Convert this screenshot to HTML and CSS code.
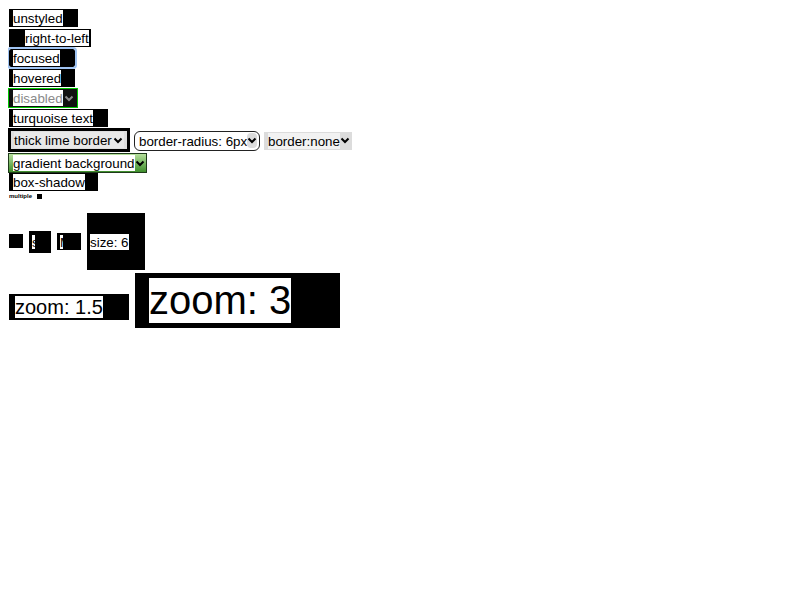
FILE: index.html
```html
<!DOCTYPE html>
<html>
<head>
<meta charset="utf-8">
<link rel="stylesheet" href="styles.css">
</head>
<body>
<div class="stack">
  <div class="row"><div class="sel w-unstyled"><span class="t">unstyled</span></div></div>
  <div class="row"><div class="sel w-rtl"><span class="t">right-to-left</span></div></div>
  <div class="row"><div class="sel w-focus"><span class="t">focused</span></div></div>
  <div class="row"><div class="sel w-hover"><span class="t">hovered</span></div></div>
  <div class="row"><div class="sel disabled"><span class="t">disabled</span><svg class="chev" width="10" height="7" viewBox="0 0 10 7"><path d="M1.5 1.5 L5 5 L8.5 1.5" fill="none" stroke="#8a8a8a" stroke-width="2"/></svg></div></div>
  <div class="row"><div class="sel w-turq"><span class="t">turquoise text</span></div></div>
  <div class="row row-tall">
    <div class="thick"><span class="tt">thick lime border</span><span class="cb"><svg width="10" height="7" viewBox="0 0 10 7"><path d="M1.5 1.5 L5 5 L8.5 1.5" fill="none" stroke="#000" stroke-width="2"/></svg></span></div>
    <div class="radius"><span class="tr">border-radius: 6px</span><span class="cbr"><svg width="10" height="7" viewBox="0 0 10 7"><path d="M1.5 1.5 L5 5 L8.5 1.5" fill="none" stroke="#000" stroke-width="2"/></svg></span></div>
    <div class="nobord"><span class="tn">border:none</span><span class="cbn"><svg width="10" height="7" viewBox="0 0 10 7"><path d="M1.5 1.5 L5 5 L8.5 1.5" fill="none" stroke="#000" stroke-width="2"/></svg></span></div>
  </div>
  <div class="row"><div class="grad"><span class="tg">gradient background</span><span class="cbg"><svg width="10" height="7" viewBox="0 0 10 7"><path d="M1.5 1.5 L5 5 L8.5 1.5" fill="none" stroke="#000" stroke-width="2"/></svg></span></div></div>
  <div class="row row-shadow"><div class="sel w-shadow"><span class="t">box-shadow</span></div></div>
  <div class="row-tiny"><span class="tiny">multiple</span><span class="tinysq"></span></div>
  <div class="row-size">
    <div class="sq"></div>
    <div class="b2"><span class="strip">s</span></div>
    <div class="b3"><span class="strip">M</span></div>
    <div class="big"><span class="t">size: 6</span></div>
  </div>
  <div class="row-zoom">
    <div class="z15"><span class="tz15">zoom: 1.5</span></div>
    <div class="z3"><span class="tz3">zoom: 3</span></div>
  </div>
</div>
</body>
</html>
```
FILE: styles.css
```css
body {
  margin: 8px;
  font-family: "Liberation Sans", Arial, sans-serif;
  font-size: 13.33px;
  line-height: 16px;
  color: #000;
  background: #fff;
}
.stack {
  display: flex;
  flex-direction: column;
  align-items: flex-start;
}
.row {
  display: flex;
  align-items: center;
  height: 20px;
  gap: 4px;
}
.row-tall { height: 25px; }
.row-shadow { height: 19px; align-items: flex-start; }
.sel {
  display: flex;
  align-items: center;
  background: #000;
  height: 18px;
  margin-left: 1px;
  padding-left: 4px;
  box-sizing: border-box;
}
.t {
  flex: none;
  background: #fff;
  height: 16px;
  line-height: 18px;
  white-space: nowrap;
}
.w-unstyled { width: 69px; }
.w-rtl { width: 82px; padding-left: 16px; }
.w-focus {
  width: 66px;
  outline: 2px solid #9fc3f2;
  border-radius: 2px;
}
.w-hover { width: 66px; }
.disabled {
  margin-left: 0;
  width: 70px;
  height: 20px;
  border: 1px solid #00c800;
  background: #111;
  padding-left: 4px;
}
.disabled .t { color: #8a8a8a; }
.chev { margin-left: auto; margin-right: 3px; }
.w-turq { width: 99px; }

.thick {
  display: flex;
  align-items: center;
  width: 122px;
  height: 24px;
  box-sizing: border-box;
  border: 3px solid #000;
  background: #dedede;
  padding: 0 3px 0 3px;
  margin-top: -1px;
}
.tt {
  flex: none;
  background: #e8e8e8;
  height: 16px;
  line-height: 18px;
  white-space: nowrap;
}
.cb {
  margin-left: auto;
  width: 13px;
  height: 16px;
  display: flex;
  align-items: center;
  justify-content: center;
  background: #e8e8e8;
}
.radius {
  display: flex;
  align-items: center;
  width: 126px;
  height: 20px;
  box-sizing: border-box;
  border: 1px solid #222;
  border-radius: 6px;
  background: #fff;
  padding: 0 2px 0 4px;
}
.tr { flex: none; white-space: nowrap; line-height: 18px; height: 16px; }
.cbr {
  margin-left: auto;
  width: 14px;
  height: 15px;
  display: flex;
  align-items: center;
  justify-content: center;
  background: #dcdcdc;
  border-radius: 4px;
}
.nobord {
  display: flex;
  align-items: center;
  width: 88px;
  height: 18px;
  box-sizing: border-box;
  background: #dcdcdc;
  padding: 0 2px 0 4px;
}
.tn { flex: none; background: #f2f2f2; white-space: nowrap; line-height: 18px; height: 16px; }
.cbn {
  margin-left: auto;
  width: 13px;
  display: flex;
  justify-content: center;
}
.grad {
  display: flex;
  align-items: center;
  width: 139px;
  height: 20px;
  box-sizing: border-box;
  border: 1px solid #1e3a1a;
  background: linear-gradient(#b6e09c, #3e8e2c);
  padding: 0 2px 0 4px;
}
.tg { flex: none; background: #fff; white-space: nowrap; height: 16px; line-height: 18px; }
.cbg {
  margin-left: auto;
  width: 14px;
  display: flex;
  justify-content: center;
}
.w-shadow { width: 89px; }

.row-tiny {
  display: flex;
  align-items: flex-start;
  height: 21px;
  margin-left: 1px;
  gap: 5px;
}
.tiny {
  font-size: 6px;
  line-height: 6px;
  font-weight: bold;
  width: 23px;
  margin-top: 1px;
}
.tinysq {
  width: 5px;
  height: 5px;
  background: #000;
  margin-top: 2px;
}
.row-size {
  display: flex;
  align-items: center;
  height: 57px;
  margin-left: 1px;
  gap: 6px;
}
.sq { width: 14px; height: 14px; background: #000; margin-top: -2px; }
.b2 {
  width: 22px;
  height: 22px;
  background: #000;
  display: flex;
  align-items: center;
  padding-left: 3px;
  box-sizing: border-box;
}
.b3 {
  width: 24px;
  height: 17px;
  background: #000;
  display: flex;
  align-items: center;
  padding-left: 3px;
  box-sizing: border-box;
}
.strip {
  background: #fff;
  width: 3px;
  height: 14px;
  line-height: 16px;
  font-size: 13.33px;
}
.big {
  width: 58px;
  height: 57px;
  background: #000;
  display: flex;
  align-items: center;
  padding-left: 3px;
  box-sizing: border-box;
}
.row-zoom {
  display: flex;
  align-items: flex-start;
  gap: 6px;
  margin-top: 3px;
  margin-left: 1px;
}
.z15 {
  margin-top: 21px;
  width: 120px;
  height: 26px;
  background: #000;
  padding: 2px 0 0 6px;
  box-sizing: border-box;
}
.tz15 {
  display: inline-block;
  background: #fff;
  height: 22px;
  font-size: 20px;
  line-height: 23px;
  white-space: nowrap;
}
.z3 {
  width: 205px;
  height: 55px;
  background: #000;
  padding: 5px 0 0 14px;
  box-sizing: border-box;
}
.tz3 {
  display: inline-block;
  background: #fff;
  height: 45px;
  font-size: 40px;
  line-height: 45px;
  white-space: nowrap;
}
```
